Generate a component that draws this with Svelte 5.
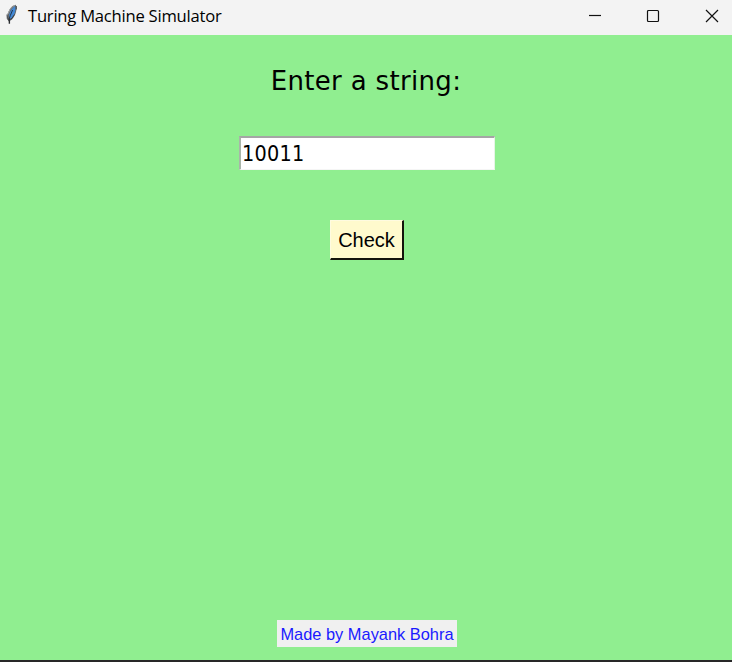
<script>
  let value = $state('10011');
</script>

<div class="window">
  <header>
    <svg class="feather" width="14" height="22" viewBox="0 0 14 22">
      <path d="M2.8 16C1.2 12 3.2 6 7.5 2L10.8 .8C12.4 5 11 11 7 15.5L4 17.5Z" fill="#64686c" />
      <path d="M4 14.5C3.7 10 5.4 5.6 10 2.1C11.4 6 9.5 11.5 6 14.8Z" fill="#4388d4" />
      <path d="M2.9 10L5.2 5.2L8.2 2.2L10.2 1.4" stroke="#a0a3a6" stroke-width="1" fill="none" />
      <path d="M7.6 6L5.3 11.5L4 15" stroke="#1c2a3c" stroke-width=".9" fill="none" />
      <path d="M4.3 14.5L4.4 19.8" stroke="#2a2c30" stroke-width="1.4" fill="none" />
      <path d="M2 10.5L2.3 14.5L3.8 16.5M4.6 15.8L7 14.2L9.5 10.5M11.3 2V5.5" stroke="#34373b" stroke-width=".9" fill="none" />
    </svg>
    <span class="title">Turing Machine Simulator</span>
    <div class="controls">
      <svg width="14" height="14" viewBox="0 0 14 14"><path d="M1 6.5H13" /></svg>
      <svg width="14" height="14" viewBox="0 0 14 14"><rect x="1.5" y="1.5" width="11" height="11" rx="1" /></svg>
      <svg width="14" height="14" viewBox="0 0 14 14"><path d="M1 1L13 13M13 1L1 13" /></svg>
    </div>
  </header>
  <main>
    <label for="entry">Enter a string:</label>
    <input id="entry" type="text" bind:value spellcheck="false" />
    <button>Check</button>
    <div class="credit">Made by Mayank Bohra</div>
  </main>
  <div class="edge"></div>
</div>

<style>
  :global(body) { margin: 0; overflow: hidden; }
  .window {
    width: 732px;
    height: 662px;
    display: flex;
    flex-direction: column;
    background: #90ee90;
    color: #000;
  }
  header {
    height: 35px;
    flex: none;
    box-sizing: border-box;
    display: flex;
    align-items: flex-start;
    padding: 4px 13px 0 5px;
    background: #f3f3f3;
  }
  .feather { flex: none; }
  .title {
    margin-left: 9px;
    font: 16.6px/24px "Open Sans", "Noto Sans", sans-serif;
    letter-spacing: -0.23px;
    white-space: nowrap;
  }
  .controls {
    margin-left: auto;
    padding-top: 5px;
    display: flex;
  }
  .controls svg { fill: none; stroke: #111; stroke-width: 1.2; }
  .controls svg + svg { margin-left: 44px; }
  .controls svg:last-child { margin-left: 45px; }
  main {
    flex: 1;
    display: flex;
    flex-direction: column;
    align-items: center;
  }
  label {
    margin-top: 29px;
    font: 26px/34px "DejaVu Sans", sans-serif;
    letter-spacing: 0.33px;
    white-space: nowrap;
  }
  input {
    box-sizing: border-box;
    width: 256px;
    height: 34px;
    margin: 38px 0 0 2px;
    padding: 0 0 0 1px;
    border: solid;
    border-width: 2px 1px 1px 2px;
    border-color: #a5a5a5 #e6f5e6 #f5f5f5 #a9b5a9;
    border-radius: 0;
    outline: none;
    background: #fff;
    color: #000;
    font: 21.4px/30px "DejaVu Sans Condensed", "DejaVu Sans", sans-serif;
    letter-spacing: 0.25px;
  }
  button {
    box-sizing: border-box;
    width: 74px;
    height: 40px;
    margin: 50px 0 0 1px;
    padding: 1px 0 0 1px;
    border: solid;
    border-width: 1px 2px 2px 1px;
    border-color: #fffbe0 #14140c #14140c #fffbe0;
    border-radius: 0;
    background: #fffacd;
    color: #000;
    font: 20px/36px "Liberation Sans", sans-serif;
  }
  .credit {
    width: 180px;
    height: 27px;
    margin: auto 0 13px 2px;
    background: #f0f0f0;
    color: #1a1aff;
    font: 16.4px/29px "Liberation Sans", sans-serif;
    text-align: center;
    white-space: nowrap;
  }
  .edge { height: 2px; flex: none; background: #282828; }
</style>
